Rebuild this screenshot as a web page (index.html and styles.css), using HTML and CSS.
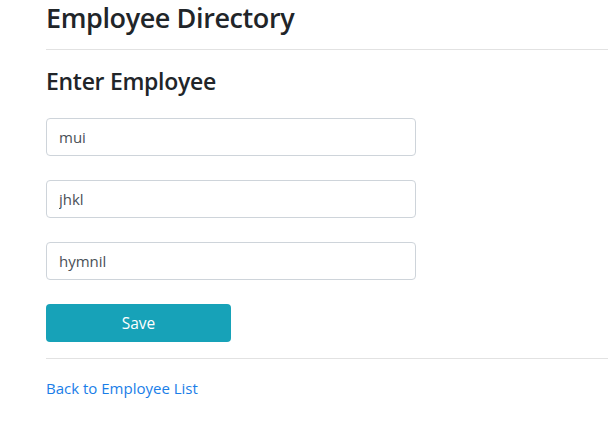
FILE: index.html
```html
<!DOCTYPE html>
<html lang="en">
<head>
<meta charset="utf-8">
<title>Employee Directory</title>
<link rel="stylesheet" href="styles.css">
</head>
<body>
<main class="page">
  <h1 class="title">Employee Directory</h1>
  <hr class="rule rule-top">
  <h2 class="subtitle">Enter Employee</h2>
  <form class="form">
    <input class="field" type="text" value="mui">
    <input class="field" type="text" value="jhkl">
    <input class="field" type="text" value="hymnil">
    <button class="btn-save" type="button">Save</button>
  </form>
  <hr class="rule rule-bottom">
  <a class="back-link" href="#">Back to Employee List</a>
</main>
</body>
</html>
```
FILE: styles.css
```css
* { box-sizing: border-box; }
html, body { margin: 0; padding: 0; background: #fff; }
body {
  font-family: "Open Sans", "Noto Sans", sans-serif;
  color: #212529;
  overflow: hidden;
}
.page {
  padding-top: 1px;
  padding-left: 46px;
  display: flex;
  flex-direction: column;
  align-items: flex-start;
}
.title {
  margin: 0;
  font-size: 27px;
  line-height: 33px;
  font-weight: 600;
  letter-spacing: -0.4px;
  color: #212529;
}
.rule {
  align-self: stretch;
  border: 0;
  border-top: 1px solid #e2e2e2;
  height: 0;
  margin: 0;
}
.rule-top { margin-top: 15px; }
.subtitle {
  margin: 17px 0 0;
  font-size: 23px;
  line-height: 29px;
  font-weight: 600;
  letter-spacing: -0.3px;
  color: #212529;
}
.form {
  margin-top: 22px;
  display: flex;
  flex-direction: column;
  gap: 24px;
  align-items: flex-start;
}
.field {
  width: 370px;
  height: 38px;
  padding: 0 12px;
  border: 1px solid #ced4da;
  border-radius: 4px;
  font-family: inherit;
  font-size: 15px;
  color: #495057;
  background: #fff;
  outline: none;
}
.btn-save {
  width: 185px;
  height: 38px;
  border: 0;
  border-radius: 4px;
  background: #17a2b8;
  color: #fff;
  font-family: inherit;
  font-size: 15.5px;
  cursor: pointer;
}
.rule-bottom { margin-top: 16px; }
.back-link {
  margin-top: 17px;
  font-size: 15px;
  line-height: 24px;
  color: #1a7ee8;
  text-decoration: none;
}
```
